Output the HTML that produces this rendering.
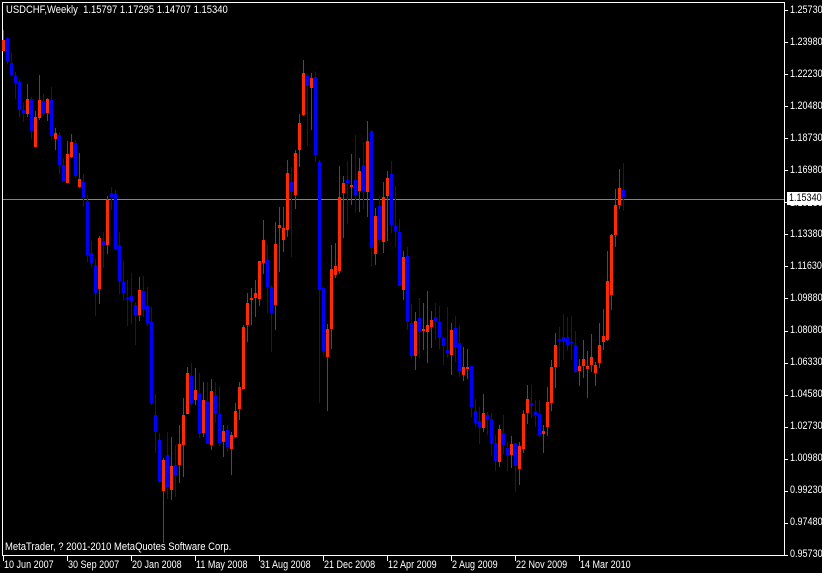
<!DOCTYPE html>
<html><head><meta charset="utf-8"><style>
html,body{margin:0;padding:0;background:#000;width:822px;height:573px;overflow:hidden}
body{position:relative;font-family:"Liberation Sans",sans-serif;font-size:11px;color:#fff}
.t{position:absolute;white-space:pre;line-height:12px;transform:scaleX(.82);transform-origin:0 0}
svg{position:absolute;left:0;top:0}
</style></head><body>
<svg id="s" width="822" height="573" xmlns="http://www.w3.org/2000/svg" shape-rendering="crispEdges">
<rect x="2.5" y="2.5" width="782" height="553" fill="none" stroke="#fff" stroke-width="1"/>
<line x1="3" y1="199.5" x2="784" y2="199.5" stroke="#778899"/>
<g id="c"></g>
<g id="tk" stroke="#fff"></g>
</svg>
<div class="t" style="left:6px;top:4px;transform:scaleX(.86)">USDCHF,Weekly  1.15797 1.17295 1.14707 1.15340</div>
<div class="t" style="left:5px;top:541px;transform:scaleX(.86)">MetaTrader, ? 2001-2010 MetaQuotes Software Corp.</div>
<div class="t" style="left:790px;top:4px">1.25730</div>
<div class="t" style="left:790px;top:36px">1.23980</div>
<div class="t" style="left:790px;top:68px">1.22230</div>
<div class="t" style="left:790px;top:100px">1.20480</div>
<div class="t" style="left:790px;top:132px">1.18730</div>
<div class="t" style="left:790px;top:164px">1.16980</div>
<div class="t" style="left:790px;top:197px">1.15230</div>
<div class="t" style="left:790px;top:228px">1.13380</div>
<div class="t" style="left:790px;top:260px">1.11630</div>
<div class="t" style="left:790px;top:292px">1.09880</div>
<div class="t" style="left:790px;top:324px">1.08080</div>
<div class="t" style="left:790px;top:356px">1.06330</div>
<div class="t" style="left:790px;top:388px">1.04580</div>
<div class="t" style="left:790px;top:420px">1.02730</div>
<div class="t" style="left:790px;top:452px">1.00980</div>
<div class="t" style="left:790px;top:484px">0.99230</div>
<div class="t" style="left:790px;top:516px">0.97480</div>
<div class="t" style="left:790px;top:548px">0.95730</div>
<div style="position:absolute;left:787px;top:192px;background:#fff;width:35px;height:13px"></div>
<div class="t" style="left:789px;top:192px;color:#000">1.15340</div>
<div class="t" style="left:4px;top:559px">10 Jun 2007</div>
<div class="t" style="left:68px;top:559px">30 Sep 2007</div>
<div class="t" style="left:132px;top:559px">20 Jan 2008</div>
<div class="t" style="left:196px;top:559px">11 May 2008</div>
<div class="t" style="left:260px;top:559px">31 Aug 2008</div>
<div class="t" style="left:324px;top:559px">21 Dec 2008</div>
<div class="t" style="left:388px;top:559px">12 Apr 2009</div>
<div class="t" style="left:452px;top:559px">2 Aug 2009</div>
<div class="t" style="left:516px;top:559px">22 Nov 2009</div>
<div class="t" style="left:580px;top:559px">14 Mar 2010</div>
<script>
var z=[
[30,[
"r,0,30,62,62","b,20,24,95,100","b,70,100,137,140","b,125,138,158,205","b,148,156,240,262","b,215,240,252,275",
"r,162,208,252,262","b,200,208,305,325","r,243,262,352,352","r,135,210,263,270","b,192,213,252,258","r,205,208,250,275",
"b,172,210,318,330","r,295,310,328,362","b,305,316,405,430","b,385,405,452,458","r,333,372,458,458","r,312,336,382,385",
"b,330,340,440,445","r,368,447,470,472","b,432,456,505,530","b,495,514,677,695","b,632,670,700,712","b,687,705,788,858",
"r,618,624,778,822","b,605,632,645,713","r,498,510,646,672","b,470,490,502,540","b,480,492,656,657","b,605,645,752,790",
"b,692,756,790,812","b,750,803,806,888","b,728,798,815,880","b,815,825,855,945","r,740,780,856,872","b,738,783,836,860",
"b,770,828,878,888","b,832,876,1118,1125","b,1092,1155,1205,1268"]],
[50,[
"b,1150,1170,1295,1300","r,1225,1230,1322,1480","b,1145,1215,1310,1345","r,1160,1248,1320,1350","b,1185,1245,1278,1342",
"r,1125,1182,1245,1300","r,1045,1095,1185,1282","r,950,968,1090,1092","b,940,978,1060,1070","r,955,1020,1050,1065",
"b,970,1028,1150,1165","r,995,1050,1148,1160","b,995,1052,1180,1182","r,988,1022,1185,1200","b,995,1035,1088,1118",
"b,1012,1092,1180,1190","r,1125,1142,1175,1220","b,1125,1140,1192,1205","r,1145,1155,1198,1275","r,1058,1082,1160,1162",
"r,995,1012,1078,1110","r,825,830,1015,1018","r,730,760,825,878","r,715,745,752,825","r,690,730,745,802","r,632,632,745,768",
"r,510,570,640,672","b,585,630,710,790","b,705,712,790,905","r,515,582,765,838","r,472,525,535,668","r,470,535,572,605",
"r,330,370,542,562","b,352,395,425,622","r,300,310,435,478","r,192,220,302,350","r,30,70,195,198","b,72,78,108,288",
"r,68,85,115,238","b,65,82,315,335"]],
[110,[
"b,150,155,540,880","b,532,535,725,740","r,642,658,742,902","r,405,478,658,718","r,400,468,496,505","r,168,262,485,492",
"r,198,220,250,385","b,152,210,220,340","r,132,225,232,285","b,75,210,255,308","r,145,183,242,308","b,95,165,243,295",
"r,33,93,245,322","b,60,62,412,470","r,295,318,432,465","b,258,288,390,398","r,215,262,398,428","r,183,205,258,392",
"b,153,192,345,368","b,228,348,362,410","b,328,366,528,530","r,422,440,540,568","b,410,438,635,658","b,582,638,738,748",
"r,605,632,738,778","b,565,625,668,748","r,578,656,662,718","r,543,645,665,758","r,602,630,650,712","b,578,622,633,690",
"b,588,636,684,718","b,682,685,710,765","b,592,720,730,745","r,640,660,735,797","b,618,653,710,755","b,645,700,785,800",
"r,710,772,795,812","r,718,770,776,808"]],
[150,[
"b,648,648,772,800","b,748,783,820,832","b,770,812,832,880","r,732,790,836,845","b,785,796,812,855","b,790,808,884,918",
"b,855,880,935,962","r,825,838,938,952","b,795,850,886,912","b,875,895,915,962","r,858,882,916,955","b,878,880,950,1025",
"r,875,888,958,1005","r,780,792,896,908","r,705,748,790,822","b,705,760,770,805","b,750,785,795,830","b,750,792,855,862",
"r,825,843,852,908","r,712,756,830,858","r,630,652,760,782","r,548,585,650,712","b,530,568,573,650","b,492,562,573,630",
"b,502,562,585,605","b,498,576,579,630","b,543,586,668,670","r,628,648,662,708","r,570,628,650,685","r,604,648,656,745",
"r,552,622,646,665","r,636,646,670,708","r,518,585,638,652","r,478,558,575,602","r,302,394,570,572","r,252,255,436,480",
"r,118,165,254,293","r,58,114,164,178","b,38,120,145,182"]]];
var s='',i=0;
z.forEach(function(g){var y0=g[0];g[1].forEach(function(d){var p=d.split(','),c=p[0]=='r';
var H=y0+(+p[1])/3,T=y0+(+p[2])/3,B=y0+(+p[3])/3,L=y0+(+p[4])/3;
var x=2+4*i,col=c?'#ff0000':'#0000ff';
s+='<rect x="'+(x+1)+'" y="'+Math.round(H)+'" width="1" height="'+Math.max(1,Math.round(L-H))+'" fill="'+col+'"/>';
s+='<rect x="'+x+'" y="'+Math.round(T)+'" width="3" height="'+Math.max(1,Math.round(B-T))+'" fill="'+(c?'#ff2a00':col)+'"/>';
i++;});});
document.getElementById('c').innerHTML=s;
var t='';
for(var k=0;k<18;k++){var y=Math.round(10+k*32.05)+.5;t+='<line x1="785" y1="'+y+'" x2="788" y2="'+y+'"/>';}
for(var k=0;k<10;k++){var x=3.5+64*k;t+='<line x1="'+x+'" y1="556" x2="'+x+'" y2="561"/>';}
document.getElementById('tk').innerHTML=t;
</script>
</body></html>
